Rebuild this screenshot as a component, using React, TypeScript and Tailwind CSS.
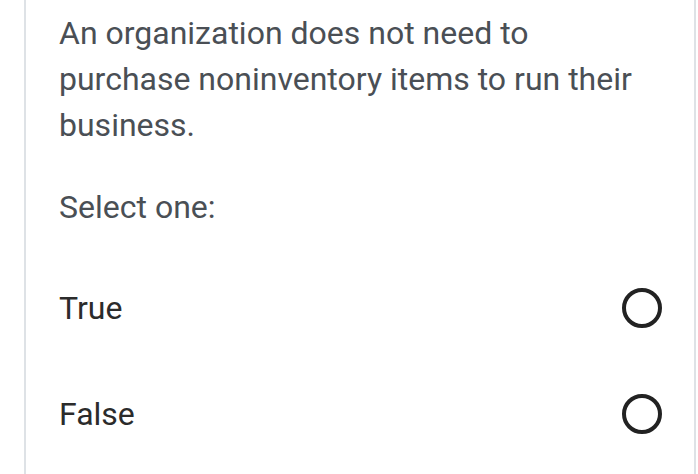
import React, { useState } from 'react';

const options = ['True', 'False'];

const App: React.FC = () => {
    const [selected, setSelected] = useState<string | null>(null);

    return (
        <div className="min-h-[474px] bg-white pl-[24px] pr-[2px]" style={{ fontFamily: 'Roboto, sans-serif' }}>
            <div className="min-h-[474px] border-x-2 border-[#dee2e6] pl-[33px] pr-[32px] pt-[10px]">
                <p className="text-[32px] leading-[46px] text-[#4a4f55]">
                    An organization does not need to purchase noninventory items to run their business.
                </p>
                <p className="mt-[36px] text-[32px] leading-[46px] text-[#4a4f55]">Select one:</p>
                <div className="mt-[25px] flex flex-col">
                    {options.map(opt => (
                        <button
                            key={opt}
                            onClick={() => setSelected(opt)}
                            className="flex h-[106px] items-center justify-between text-left"
                        >
                            <span className="text-[32px] text-[#2b2b2b]">{opt}</span>
                            <span className="flex h-[40px] w-[40px] items-center justify-center rounded-full border-[4px] border-[#222]">
                                {selected === opt && <span className="h-[20px] w-[20px] rounded-full bg-[#222]" />}
                            </span>
                        </button>
                    ))}
                </div>
            </div>
        </div>
    );
};

export default App;
